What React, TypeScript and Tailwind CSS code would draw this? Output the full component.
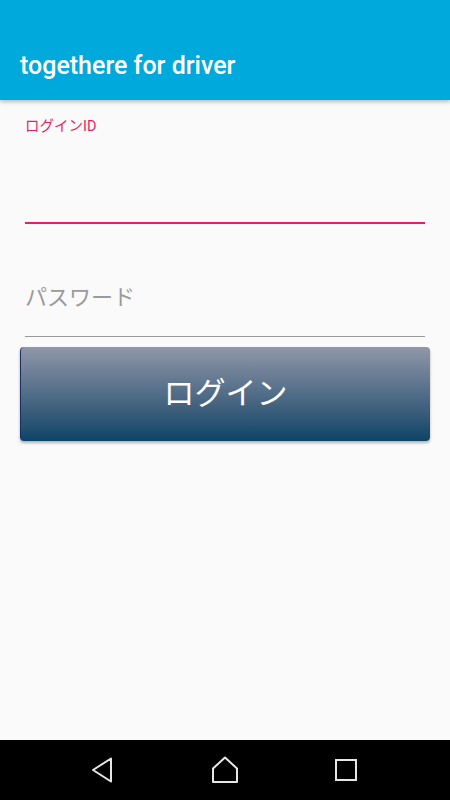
export default function App() {
  return (
    <div className="flex h-[800px] w-[450px] flex-col bg-[#fafafa] font-['Roboto','Noto_Sans_CJK_JP',sans-serif]">
      {/* App bar */}
      <header className="relative z-10 flex h-[100px] shrink-0 items-end bg-[#00a9dc] px-5 pb-[19px] shadow-[0_2px_4px_rgba(0,0,0,0.25)]">
        <h1 className="text-[25px] font-medium leading-[30px] text-white">togethere for driver</h1>
      </header>

      {/* Form */}
      <main className="flex flex-1 flex-col px-5">
        <div className="px-[5px] pt-[17px]">
          <label className="block text-[14.5px] leading-[20px] text-[#e91e63]">ログインID</label>
          <input
            type="text"
            className="mt-[34px] block h-[53px] w-full border-b-2 border-[#f0196a] bg-transparent text-[22px] outline-none"
          />
        </div>

        <div className="px-[5px] pt-[5px]">
          <input
            type="password"
            placeholder="パスワード"
            className="block h-[108px] w-full border-b border-[#999999] bg-transparent pt-[42px] pb-[12px] text-[22px] leading-[32px] text-[#333] outline-none placeholder:text-[#9b9b9b]"
          />
        </div>

        <button
          type="button"
          className="mt-[10px] flex h-[94px] w-full items-center justify-center rounded-[4px] border-l border-[#1c2d63] bg-gradient-to-b from-[#9097a9] to-[#0a4466] text-[31px] text-white shadow-[0_2px_3px_rgba(0,0,0,0.3)]"
        >
          ログイン
        </button>
      </main>

      {/* Android nav bar */}
      <nav className="flex h-[60px] shrink-0 items-center justify-center gap-[93px] bg-black pl-[0px]">
        <svg width="28" height="28" viewBox="0 0 28 28">
          <path d="M21 2.5 L3 14 L21 25.5 Z" fill="none" stroke="#e6e6e6" strokeWidth="2" strokeLinejoin="round" />
        </svg>
        <svg width="28" height="28" viewBox="0 0 28 28">
          <path d="M2 12.5 L14 1.5 L26 12.5 L26 26 L2 26 Z" fill="none" stroke="#e6e6e6" strokeWidth="2" strokeLinejoin="round" />
        </svg>
        <svg width="28" height="28" viewBox="0 0 28 28">
          <rect x="4" y="4" width="20" height="20" fill="none" stroke="#e6e6e6" strokeWidth="2" />
        </svg>
      </nav>
    </div>
  )
}
